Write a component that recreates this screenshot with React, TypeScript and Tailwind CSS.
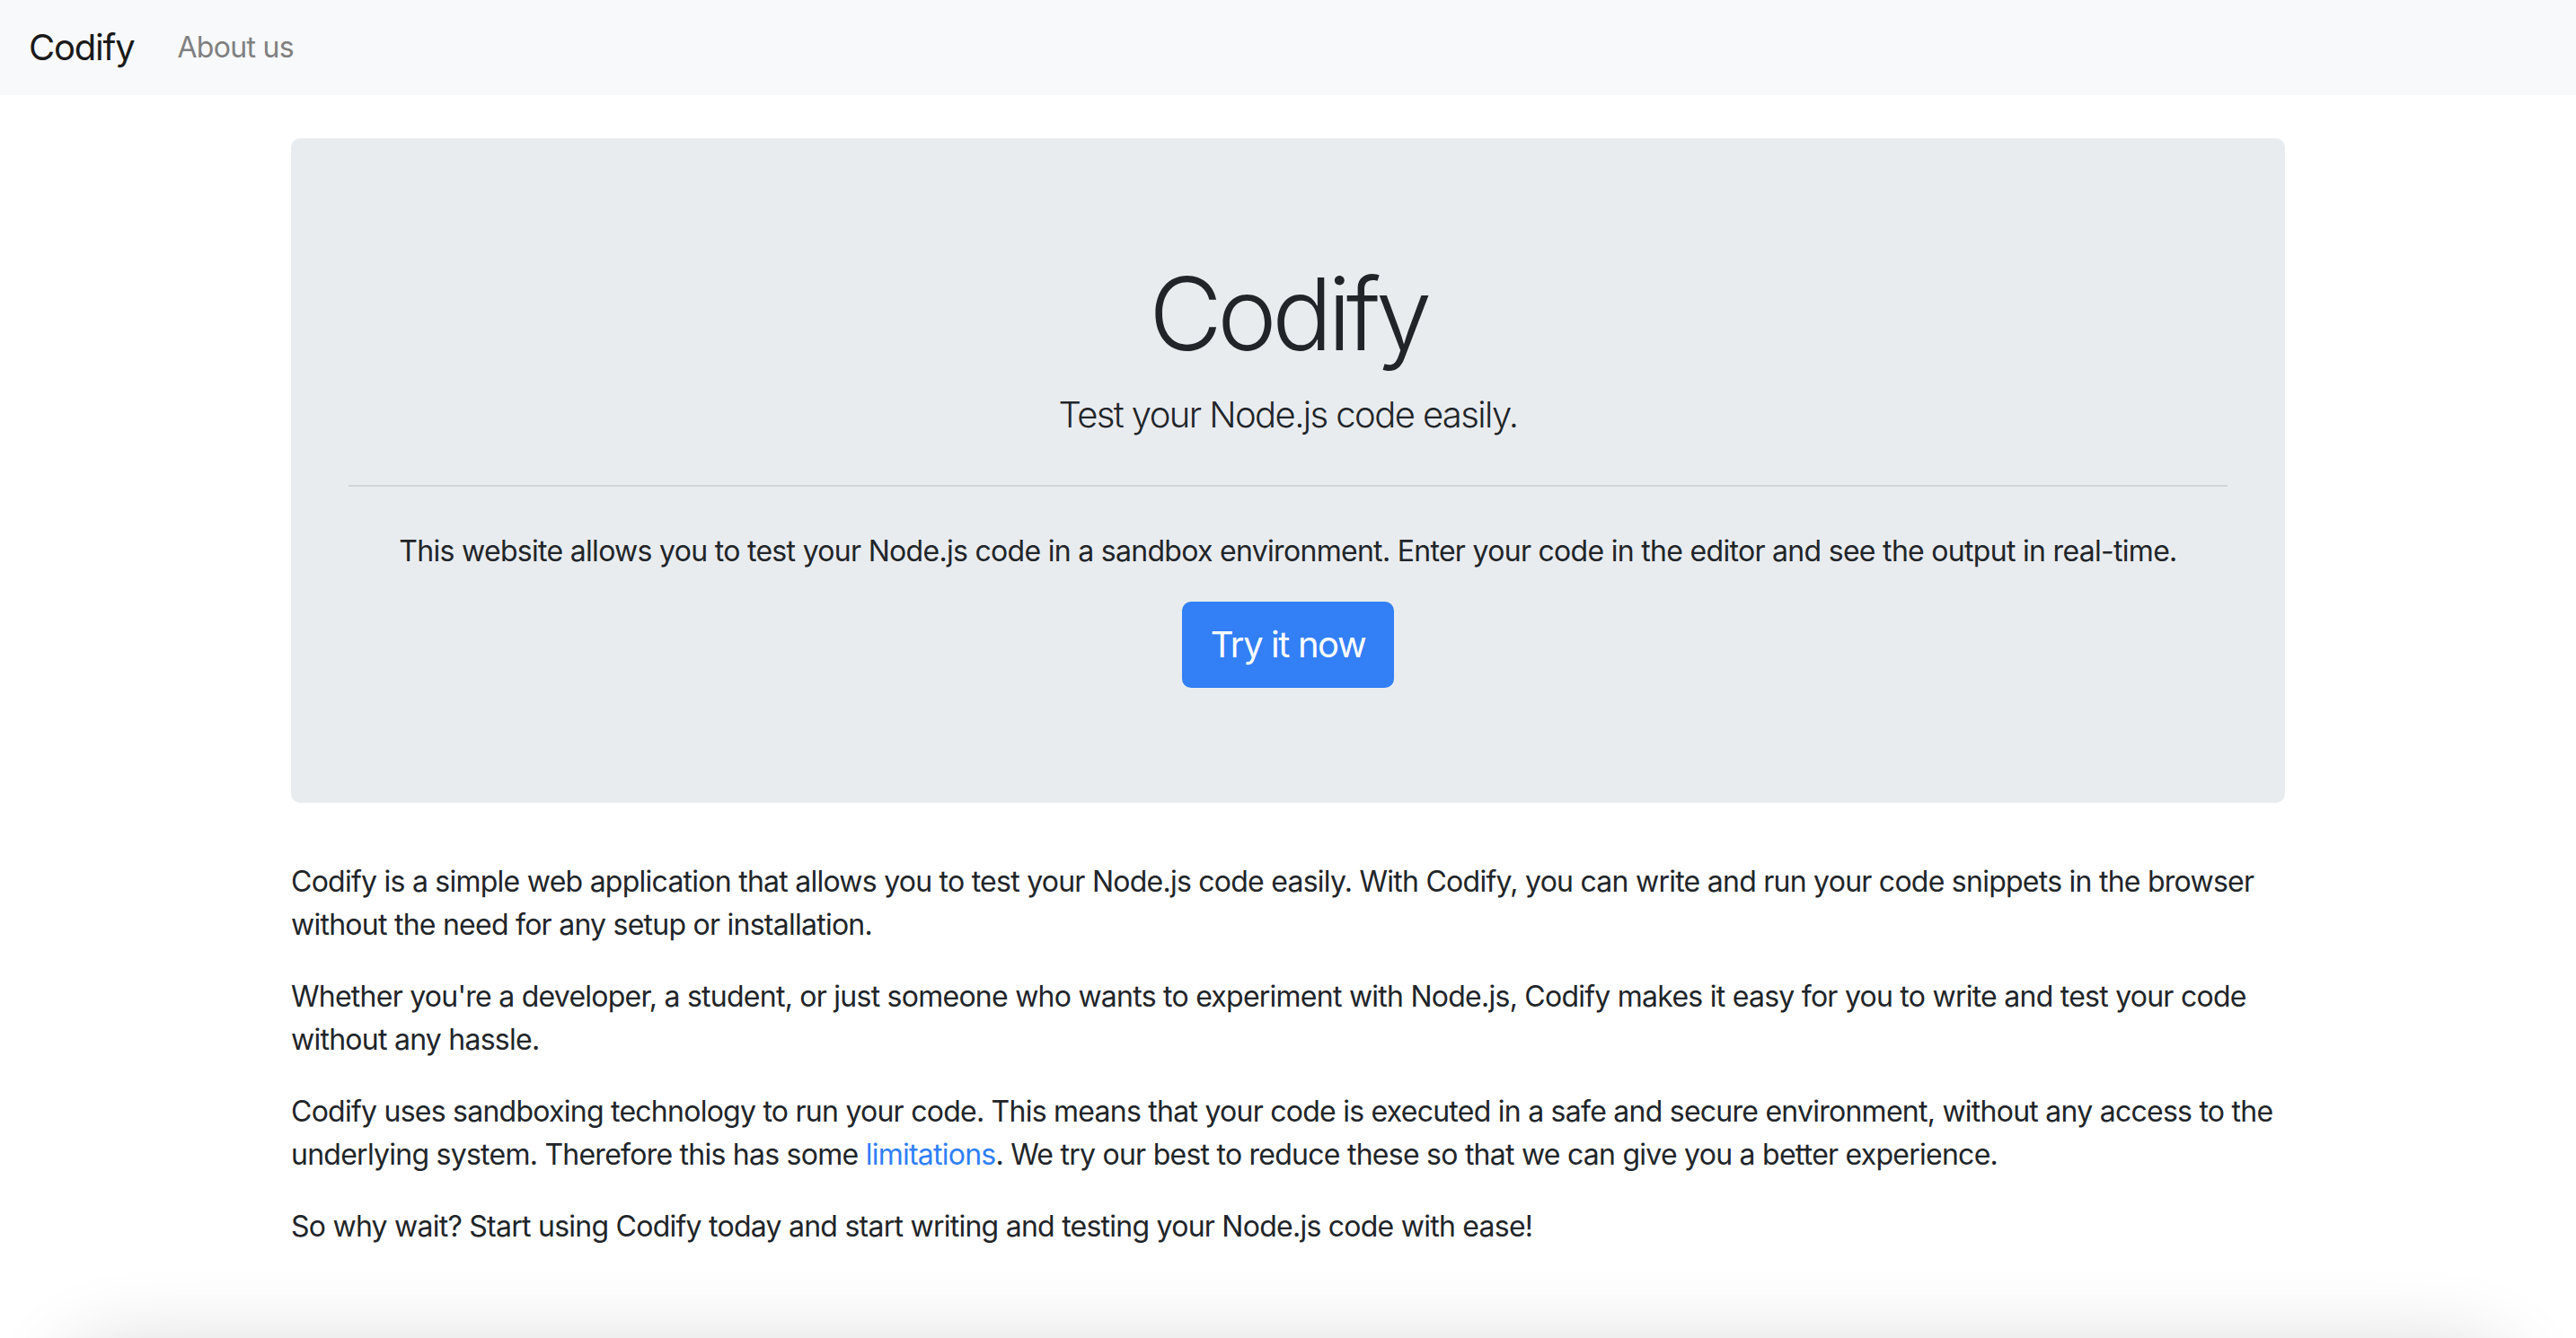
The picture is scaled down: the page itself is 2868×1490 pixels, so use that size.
export default function App() {
  return (
    <div className="min-h-screen bg-white text-[#212529] font-['Inter','Liberation_Sans',sans-serif]">
      {/* navbar */}
      <nav className="h-[106px] bg-[#f8f9fa] flex items-center px-8">
        <a className="text-[40px] leading-[60px] tracking-[-1.2px] text-[#1a1a1a] mr-8">Codify</a>
        <a className="text-[32px] leading-[48px] tracking-[-0.7px] text-[#7f8081] px-4">About us</a>
      </nav>

      <main className="w-[2220px] mx-auto pt-12">
        <section className="bg-[#e9ecef] rounded-[10px] px-16 py-32 text-center">
          <h1 className="text-[112px] leading-[134px] font-light tracking-[-5.5px]">Codify</h1>
          <p className="mt-4 text-[40px] leading-[60px] font-light tracking-[-1.6px]">Test your Node.js code easily.</p>
          <hr className="mt-12 mb-12 border-t-2 border-[#d2d4d6]" />
          <p className="text-[32px] leading-[48px] tracking-[-0.7px]">
            This website allows you to test your Node.js code in a sandbox environment. Enter your code in the editor and see the output in real-time.
          </p>
          <button className="mt-8 h-[96px] px-8 rounded-[10px] bg-[#327ff6] text-white text-[40px] leading-[60px] tracking-[-1.4px]">
            Try it now
          </button>
        </section>

        <div className="mt-16 text-[32px] leading-[48px] tracking-[-0.75px] flex flex-col gap-8">
          <p>
            Codify is a simple web application that allows you to test your Node.js code easily. With Codify, you can write and run your code snippets in the browser without the need for any setup or installation.
          </p>
          <p>
            Whether you're a developer, a student, or just someone who wants to experiment with Node.js, Codify makes it easy for you to write and test your code without any hassle.
          </p>
          <p>
            Codify uses sandboxing technology to run your code. This means that your code is executed in a safe and secure environment, without any access to the underlying system. Therefore this has some{' '}
            <a className="text-[#2f7ff5]">limitations</a>. We try our best to reduce these so that we can give you a better experience.
          </p>
          <p>So why wait? Start using Codify today and start writing and testing your Node.js code with ease!</p>
        </div>
      </main>

      <div className="mt-[110px] mx-[70px] h-[200px] bg-white rounded-[60px] shadow-[0_0_90px_rgba(0,0,0,0.16)]" />
    </div>
  )
}
